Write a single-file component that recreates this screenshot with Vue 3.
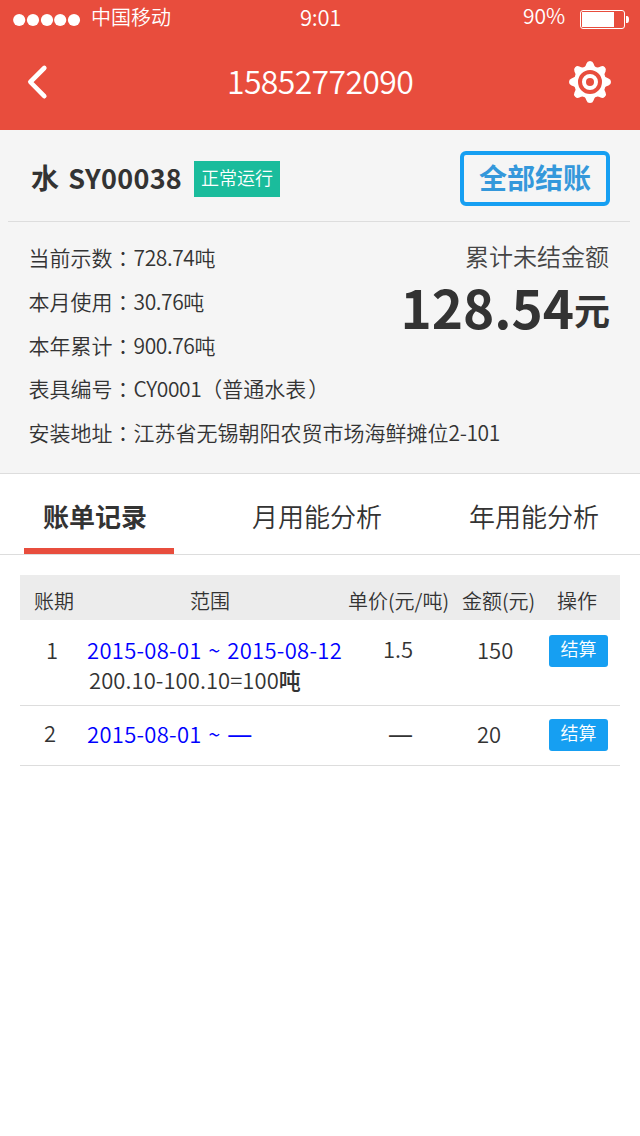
<script setup>
const details = [
  { label: '当前示数', num: '728.74', text: '吨' },
  { label: '本月使用', num: '30.76', text: '吨' },
  { label: '本年累计', num: '900.76', text: '吨' },
  { label: '表具编号', num: 'CY0001', note: '普通水表' },
  { label: '安装地址', pre: '江苏省无锡朝阳农贸市场海鲜摊位', num: '2-101' }
]
const tabs = ['账单记录', '月用能分析', '年用能分析']
const teeth = [0, 45, 90, 135, 180, 225, 270, 315]
</script>

<template>
  <div class="screen">
    <header class="top">
      <div class="status">
        <div class="carrier">
          <svg width="68" height="14" viewBox="0 0 68 14" fill="#fff">
            <circle cx="6.2" cy="7" r="6.1" /><circle cx="20" cy="7" r="6.1" /><circle cx="34" cy="7" r="6.1" /><circle cx="47.2" cy="7" r="6.1" /><circle cx="61" cy="7" r="6.1" />
          </svg>
          <span class="net">中国移动</span>
        </div>
        <span class="time">9:01</span>
        <div class="power">
          <span class="pct">90%</span>
          <svg width="50" height="20" viewBox="0 0 50 20">
            <rect x="0.5" y="0.5" width="44" height="18" rx="2.5" fill="none" stroke="#fff" />
            <rect x="2" y="2" width="32" height="15" fill="#fff" />
            <path d="M46 6h1q2 0 2 3.500t-2 3.500h-1z" fill="#fff" />
          </svg>
        </div>
      </div>
      <div class="nav">
        <svg class="back" width="22" height="36" viewBox="0 0 22 36" fill="none" stroke="#fff" stroke-width="4.600" stroke-linecap="round" stroke-linejoin="round">
          <path d="M18.300 4L4.300 18l14 14.200" />
        </svg>
        <h1>15852772090</h1>
        <svg class="gear" width="42" height="42" viewBox="-21 -21 42 42">
          <g fill="#fff">
            <circle r="15.800" />
            <path v-for="a in teeth" :key="a" :transform="`rotate(${a})`" d="M-6.800-14Q-4-15.500-3.500-18.500Q-2.800-21 0-21T3.500-18.500Q4-15.500 6.800-14z" />
          </g>
          <circle r="10" fill="none" stroke="#e84d3d" stroke-width="4" />
          <circle r="4" fill="#e84d3d" />
        </svg>
      </div>
    </header>

    <section class="meter">
      <div class="meter-head">
        <strong class="name">水 <span>SY00038</span></strong>
        <span class="badge">正常运行</span>
        <button class="settle-all">全部结账</button>
      </div>
      <div class="meter-body">
        <ul>
          <li v-for="d in details" :key="d.label">{{ d.label }}<span class="colon">：</span>{{ d.pre }}<span class="num">{{ d.num }}</span>{{ d.text }}<template v-if="d.note">（{{ d.note }}<span class="close">）</span></template></li>
        </ul>
        <div class="due">
          <p class="due-label">累计未结金额</p>
          <p class="amount">128.54<span>元</span></p>
        </div>
      </div>
    </section>

    <nav class="tabs">
      <a v-for="(t, i) in tabs" :key="t" :class="{ active: i === 0 }">{{ t }}</a>
    </nav>

    <div class="bills">
      <div class="row head">
        <span class="h1c">账期</span><span class="h2c">范围</span><span>单价(元/吨)</span><span>金额(元)</span><span class="h5c">操作</span>
      </div>
      <div class="row first">
        <span class="idx">1</span>
        <div class="range">
          <a>2015-08-01 ~ 2015-08-12</a>
          <p>200.10-100.10=100<b>吨</b></p>
        </div>
        <span class="price">1.5</span>
        <span class="sum">150</span>
        <button class="settle">结算</button>
      </div>
      <div class="row second">
        <span class="idx">2</span>
        <div class="range"><a>2015-08-01 ~ <em>—</em></a></div>
        <span class="price"><em>—</em></span>
        <span class="sum">20</span>
        <button class="settle">结算</button>
      </div>
    </div>
  </div>
</template>

<style>
body { margin: 0; background: #fff; }
</style>

<style scoped>
.screen { width: 640px; height: 1136px; overflow: hidden; background: #fff; color: #333; font-family: "Noto Sans CJK SC", "Open Sans", sans-serif; font-weight: 350; white-space: nowrap; }
h1, p, ul { margin: 0; padding: 0; }
li { list-style: none; }
button { font-family: inherit; box-sizing: border-box; padding: 0; margin: 0; display: block; }
svg { display: block; flex: none; }
em { font-style: normal; }
.top { height: 130px; background: #e84d3d; color: #fff; }
.status { height: 36px; display: grid; grid-template-columns: 300px 223px 117px; line-height: 32px; }
.carrier { display: flex; padding-left: 13px; gap: 10px; }
.carrier svg { margin-top: 13px; }
.net { font-size: 20px; line-height: 33px; }
.time { font-size: 22px; letter-spacing: -0.3px; }
.pct { font-size: 21px; width: 57px; line-height: 31px; }
.power { display: flex; }
.power svg { margin-top: 10px; }
.nav { height: 94px; display: grid; grid-template-columns: 201px 1fr 71px; padding-left: 26px; }
.back { margin-top: 28px; }
.gear { margin-top: 25px; }
h1 { font-size: 32px; font-weight: 350; letter-spacing: -0.65px; line-height: 89px; }
.meter { height: 343px; background: #f5f5f5; border-bottom: 1px solid #ddd; }
.meter-head { height: 91px; margin: 0 10px 0 8px; border-bottom: 1px solid #ddd; display: flex; align-items: flex-start; }
.name { width: 162px; margin-left: 23px; font-size: 28px; font-weight: 700; line-height: 95px; }
.name span { font-size: 27px; line-height: 1; margin-left: 3px; letter-spacing: 0.3px; }
.badge { width: 86px; height: 36px; margin-top: 31px; margin-left: 1px; background: #1abc9c; color: #fff; font-size: 18px; line-height: 32px; text-align: center; }
.settle-all { width: 150px; height: 55px; margin: 21px 20px 0 auto; border: 4px solid #169ff2; border-radius: 6px; background: none; color: #3498db; font-size: 28px; font-weight: 700; line-height: 42px; padding-bottom: 4px; }
.meter-body { display: flex; justify-content: space-between; padding: 13px 30px 0 28.5px; }
li { font-size: 21px; height: 43.75px; line-height: 44.5px; }
.colon { font-family: "Noto Sans CJK TC", sans-serif; line-height: 1; }
.close { position: relative; left: 2px; }
.num { letter-spacing: -0.4px; }
.due { width: 0; display: flex; flex-direction: column; align-items: flex-end; }
.due-label { font-size: 24px; line-height: 41px; color: #444; padding-right: 1px; }
.amount { font-size: 53px; font-weight: 700; line-height: 61px; }
.amount span { font-size: 36px; line-height: 1; position: relative; top: -4px; }
.tabs { height: 80px; border-bottom: 1px solid #ddd; padding: 0 31px 0 24px; display: grid; grid-template-columns: 218px 217px 150px; }
.tabs a { width: 150px; height: 80px; box-sizing: border-box; text-align: center; font-size: 26px; line-height: 83px; }
.tabs .active { font-weight: 700; border-bottom: 6px solid #e84d3d; padding-right: 8px; }
.bills { margin: 20px 20px 0; }
.row { display: grid; grid-template-columns: 67px 261px 114px 87px 71px; align-items: start; font-size: 22px; }
.head { height: 45px; background: #ececec; font-size: 20px; line-height: 51px; }
.h1c { padding-left: 14px; }
.h2c { padding-left: 103px; }
.h5c { padding-left: 8px; }
.first { height: 85px; border-bottom: 1px solid #ddd; line-height: 30px; }
.second { height: 59px; border-bottom: 1px solid #ddd; line-height: 30px; }
.idx { padding: 14px 0 0 26px; }
.second .idx { padding: 11px 0 0 24px; }
.range { padding-top: 14px; }
.range a { color: #00f; letter-spacing: 0.3px; word-spacing: 1.4px; display: block; }
.range p { padding-left: 2px; letter-spacing: 0.08px; line-height: 31px; }
.range b { font-weight: 500; }
.second .range { padding-top: 12px; }
.price { padding: 13px 0 0 35px; }
.second .price { padding: 12px 0 0 40px; }
.sum { padding: 14px 0 0 15px; }
.second .sum { padding-top: 12px; }
em { font-family: "Open Sans", sans-serif; font-size: 25px; font-weight: 400; line-height: 1; }
.settle { width: 59px; height: 32px; margin-top: 15px; border: 0; border-radius: 3px; background: #169ff2; color: #fff; font-size: 18px; font-weight: 350; line-height: 26px; padding-bottom: 6px; }
.second .settle { margin-top: 13px; }
</style>
